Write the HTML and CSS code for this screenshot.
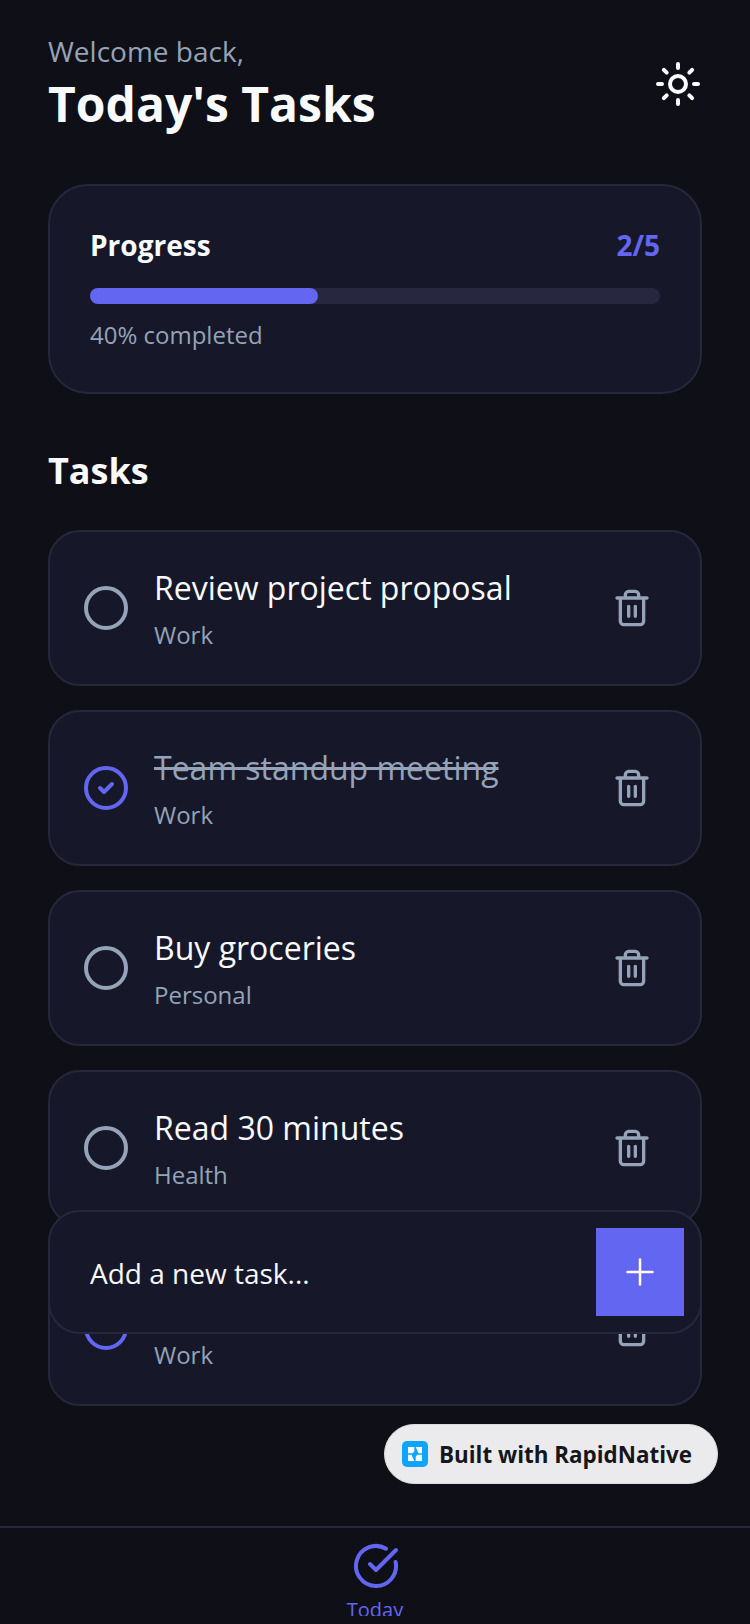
FILE: index.html
```html
<!DOCTYPE html>
<html lang="en">

<head>
    <meta charset="UTF-8">
    <title>Today's Tasks</title>
    <link rel="stylesheet" href="styles.css">
</head>

<body>
    <div class="screen">
        <main class="content">
            <header class="top">
                <div>
                    <p class="welcome">Welcome back,</p>
                    <h1 class="title">Today's Tasks</h1>
                </div>
                <svg class="icon sun" viewBox="0 0 24 24">
                    <circle cx="12" cy="12" r="4"/>
                    <path d="M12 2v2M12 20v2M4.93 4.93l1.41 1.41M17.66 17.66l1.41 1.41M2 12h2M20 12h2M6.34 17.66l-1.41 1.41M19.07 4.93l-1.41 1.41"/>
                </svg>
            </header>

            <section class="progress">
                <div class="progress-head">
                    <span class="progress-label">Progress</span>
                    <span class="progress-count">2/5</span>
                </div>
                <div class="bar"><div class="bar-fill" style="width: 40%"></div></div>
                <p class="progress-note">40% completed</p>
            </section>

            <h2 class="section-title">Tasks</h2>

            <div class="task">
                <svg class="icon check" viewBox="0 0 24 24"><circle cx="12" cy="12" r="10"/></svg>
                <div class="task-text">
                    <div class="task-name">Review project proposal</div>
                    <div class="task-tag">Work</div>
                </div>
                <svg class="icon trash" viewBox="0 0 24 24"><path d="M3 6h18M19 6v14c0 1-1 2-2 2H7c-1 0-2-1-2-2V6M8 6V4c0-1 1-2 2-2h4c1 0 2 1 2 2v2M10 11v6M14 11v6"/></svg>
            </div>
            <div class="task">
                <svg class="icon check done" viewBox="0 0 24 24"><circle cx="12" cy="12" r="10"/><path d="M9 12l2 2 4-4"/></svg>
                <div class="task-text">
                    <div class="task-name struck">Team standup meeting</div>
                    <div class="task-tag">Work</div>
                </div>
                <svg class="icon trash" viewBox="0 0 24 24"><path d="M3 6h18M19 6v14c0 1-1 2-2 2H7c-1 0-2-1-2-2V6M8 6V4c0-1 1-2 2-2h4c1 0 2 1 2 2v2M10 11v6M14 11v6"/></svg>
            </div>
            <div class="task">
                <svg class="icon check" viewBox="0 0 24 24"><circle cx="12" cy="12" r="10"/></svg>
                <div class="task-text">
                    <div class="task-name">Buy groceries</div>
                    <div class="task-tag">Personal</div>
                </div>
                <svg class="icon trash" viewBox="0 0 24 24"><path d="M3 6h18M19 6v14c0 1-1 2-2 2H7c-1 0-2-1-2-2V6M8 6V4c0-1 1-2 2-2h4c1 0 2 1 2 2v2M10 11v6M14 11v6"/></svg>
            </div>
            <div class="task">
                <svg class="icon check" viewBox="0 0 24 24"><circle cx="12" cy="12" r="10"/></svg>
                <div class="task-text">
                    <div class="task-name">Read 30 minutes</div>
                    <div class="task-tag">Health</div>
                </div>
                <svg class="icon trash" viewBox="0 0 24 24"><path d="M3 6h18M19 6v14c0 1-1 2-2 2H7c-1 0-2-1-2-2V6M8 6V4c0-1 1-2 2-2h4c1 0 2 1 2 2v2M10 11v6M14 11v6"/></svg>
            </div>
            <div class="task">
                <svg class="icon check done" viewBox="0 0 24 24"><circle cx="12" cy="12" r="10"/><path d="M9 12l2 2 4-4"/></svg>
                <div class="task-text">
                    <div class="task-name struck"></div>
                    <div class="task-tag">Work</div>
                </div>
                <svg class="icon trash" viewBox="0 0 24 24"><path d="M3 6h18M19 6v14c0 1-1 2-2 2H7c-1 0-2-1-2-2V6M8 6V4c0-1 1-2 2-2h4c1 0 2 1 2 2v2M10 11v6M14 11v6"/></svg>
            </div>
        </main>

        <form class="add-task">
            <span class="add-text">Add a new task...</span>
            <button type="button" class="add-btn">
                <svg class="icon plus" viewBox="0 0 24 24"><path d="M4.500 12h15M12 4.500v15"/></svg>
            </button>
        </form>

        <div class="badge">
            <svg class="badge-logo" viewBox="0 0 26 26">
                <rect width="26" height="26" rx="5" fill="#0ea5ff"/>
                <path d="M6 6h6.300v4.500L10.500 12.300H6zM13.700 6H20v6.300h-3.500zM6 13.700h3.500L12.300 20H6zM15.500 13.700H20V20h-6.300v-4.500z" fill="#fff"/>
            </svg>
            <span>Built with RapidNative</span>
        </div>

        <nav class="tabs">
            <div class="tab-item">
                <svg class="icon tab-icon" viewBox="0 0 24 24"><path d="M21.801 10A10 10 0 1 1 17 3.335M9 11l3 3L22 4"/></svg>
                <span class="tab-label">Today</span>
            </div>
        </nav>
    </div>
</body>

</html>
```

FILE: styles.css
```css
* {
    box-sizing: border-box;
}

body {
    margin: 0;
    background-color: #0f0f17;
    font-family: "Open Sans", sans-serif;
}

p, h1, h2 {
    margin: 0;
}

.screen {
    position: relative;
    display: flex;
    flex-direction: column;
    width: 750px;
    height: 1624px;
    overflow: hidden;
}

.content {
    display: flex;
    flex-direction: column;
    flex: 1;
    min-height: 0;
    padding: 32px 48px 0;
    overflow: hidden;
}

.icon {
    flex-shrink: 0;
    fill: none;
    stroke: currentColor;
    stroke-width: 2;
    stroke-linecap: round;
    stroke-linejoin: round;
}

.top {
    display: flex;
    justify-content: space-between;
    align-items: center;
}

.welcome {
    margin-top: -1px;
    font-size: 28px;
    line-height: 40px;
    color: #94a3b8;
}

.title {
    margin-top: 1px;
    font-size: 48px;
    line-height: 64px;
    font-weight: 700;
    color: #f8fafc;
}

.sun {
    width: 48px;
    height: 48px;
    color: #f8fafc;
}

.progress {
    margin-top: 48px;
    height: 210px;
    padding: 40px;
    background-color: #161829;
    border: 2px solid #27273c;
    border-radius: 40px;
}

.progress-head {
    display: flex;
    justify-content: space-between;
    align-items: center;
    height: 38px;
}

.progress-label {
    font-size: 28px;
    font-weight: 700;
    color: #f8fafc;
}

.progress-count {
    font-size: 28px;
    font-weight: 700;
    color: #6366f1;
}

.bar {
    margin-top: 24px;
    height: 16px;
    background-color: #27273f;
    border-radius: 8px;
}

.bar-fill {
    height: 100%;
    background-color: #6366f1;
    border-radius: 8px;
}

.progress-note {
    margin-top: 15px;
    font-size: 24px;
    line-height: 32px;
    color: #94a3b8;
}

.section-title {
    margin: 53px 0 35px;
    font-size: 36px;
    line-height: 48px;
    font-weight: 700;
    color: #f8fafc;
}

.task {
    display: flex;
    align-items: center;
    flex-shrink: 0;
    height: 156px;
    margin-bottom: 24px;
    padding: 0 48px 0 32px;
    background-color: #161829;
    border: 2px solid #27273c;
    border-radius: 32px;
}

.check {
    width: 48px;
    height: 48px;
    color: #94a3b8;
}

.check.done {
    color: #6366f1;
}

.task-text {
    flex: 1;
    margin-left: 24px;
}

.task-name {
    min-height: 44px;
    font-size: 32px;
    line-height: 44px;
    color: #f8fafc;
}

.task-name.struck {
    color: #94a3b8;
    text-decoration: line-through;
}

.task-tag {
    margin-top: 9px;
    font-size: 24px;
    line-height: 32px;
    color: #94a3b8;
}

.trash {
    width: 40px;
    height: 40px;
    color: #94a3b8;
}

.add-task {
    position: absolute;
    left: 48px;
    top: 1210px;
    display: flex;
    justify-content: space-between;
    align-items: center;
    width: 654px;
    height: 124px;
    padding: 0 16px 0 40px;
    background-color: #161829;
    border: 2px solid #27273c;
    border-radius: 32px;
}

.add-text {
    margin-top: 2px;
    font-size: 28px;
    color: #f8fafc;
}

.add-btn {
    display: flex;
    justify-content: center;
    align-items: center;
    width: 88px;
    height: 88px;
    padding: 0;
    border: none;
    background-color: #6366f1;
    color: #fff;
}

.plus {
    width: 40px;
    height: 40px;
    stroke-width: 1.500;
}

.badge {
    position: absolute;
    left: 384px;
    top: 1424px;
    display: flex;
    align-items: center;
    gap: 11px;
    width: 334px;
    height: 60px;
    padding-left: 17px;
    background-color: #ebebee;
    border: 1px solid #dcdce0;
    border-radius: 30px;
    font-size: 22.400px;
    font-weight: 700;
    color: #16161a;
}

.badge-logo {
    width: 26px;
    height: 26px;
}

.tabs {
    flex-shrink: 0;
    height: 98px;
    border-top: 2px solid #27273c;
}

/* label runs past the bottom of the bar in the design */
.tab-item {
    display: flex;
    flex-direction: column;
    align-items: center;
    height: 88px;
    padding-top: 14px;
    overflow: hidden;
}

.tab-icon {
    width: 48px;
    height: 48px;
    margin-left: 2px;
    color: #6366f1;
}

.tab-label {
    margin-top: 6px;
    font-size: 20px;
    line-height: 28px;
    color: #6366f1;
}
```
